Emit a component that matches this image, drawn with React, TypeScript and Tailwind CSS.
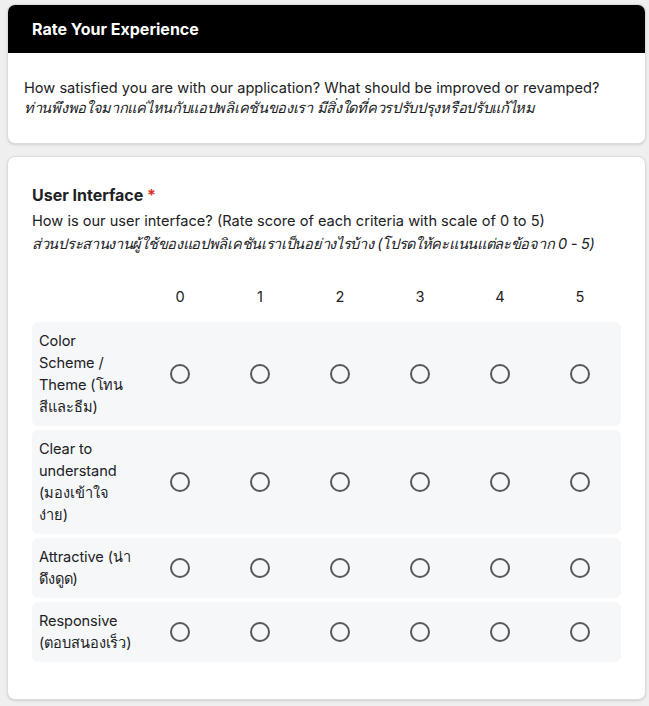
const font = "font-['Inter','Noto_Sans','Noto_Sans_CJK_SC',sans-serif]";

const scores = [0, 1, 2, 3, 4, 5];

const criteria = [
  "Color Scheme / Theme (โทนสีและธีม)",
  "Clear to understand (มองเข้าใจง่าย)",
  "Attractive (น่าดึงดูด)",
  "Responsive (ตอบสนองเร็ว)",
];

function Radio() {
  return (
    <span className="block h-[20px] w-[20px] rounded-full border-2 border-[#55585d] bg-transparent" />
  );
}

export default function App() {
  return (
    <div className={`min-h-screen bg-[#efefef] pl-[7px] pr-[3px] pt-[4px] pb-2 text-[#202124] ${font}`}>
      <div className="overflow-hidden rounded-lg border border-[#dcdcdc] bg-white shadow-sm">
        <div className="flex h-[48px] items-center bg-black px-6 text-[16px] font-bold text-white">
          Rate Your Experience
        </div>
        <div className="px-4 pt-[25px] pb-[25px] text-[14.6px] leading-[20px]">
          <p>How satisfied you are with our application? What should be improved or revamped?</p>
          <p className="italic tracking-[-0.3px]">ท่านพึงพอใจมากแค่ไหนกับแอปพลิเคชันของเรา มีสิ่งใดที่ควรปรับปรุงหรือปรับแก้ไหม</p>
        </div>
      </div>

      <div className="mt-[12px] rounded-lg border border-[#dcdcdc] bg-white px-6 pt-[26px] pb-[37px] shadow-sm">
        <h2 className="text-[16px] font-bold leading-[24px]">
          User Interface <span className="text-[#d93025]">*</span>
        </h2>
        <div className="mt-[3px] text-[14.6px] leading-[23px]">
          <p>How is our user interface? (Rate score of each criteria with scale of 0 to 5)</p>
          <p className="italic tracking-[-0.3px]">ส่วนประสานงานผู้ใช้ของแอปพลิเคชันเราเป็นอย่างไรบ้าง (โปรดให้คะแนนแต่ละข้อจาก 0 - 5)</p>
        </div>

        <div className="mt-[30px] grid grid-cols-[108px_repeat(6,80px)] text-[14.6px] leading-[22px]">
          <div />
          {scores.map((s) => (
            <div key={s} className="text-center">
              {s}
            </div>
          ))}
        </div>

        <div className="mt-[14px] flex flex-col gap-[4px]">
          {criteria.map((c) => (
            <div
              key={c}
              className="grid grid-cols-[108px_repeat(6,80px)] items-center rounded-md bg-[#f6f7f9] py-[8px] text-[14.6px] leading-[22px]"
            >
              <div className="pl-[7px] pr-[8px] tracking-[-0.1px]">{c}</div>
              {scores.map((s) => (
                <div key={s} className="flex justify-center">
                  <Radio />
                </div>
              ))}
            </div>
          ))}
        </div>
      </div>
    </div>
  );
}
